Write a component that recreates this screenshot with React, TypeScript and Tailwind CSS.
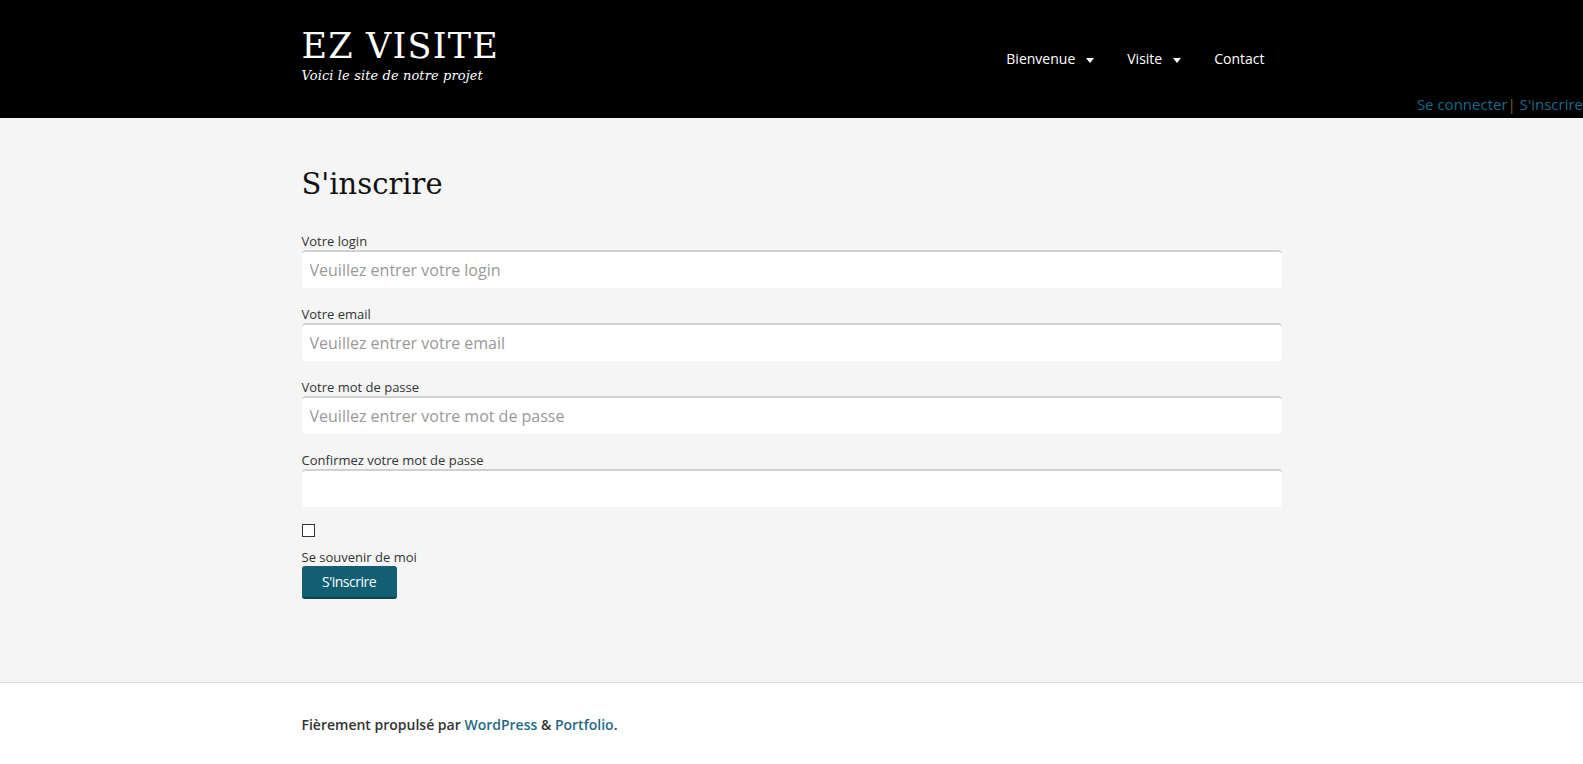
import { useState } from "react";

const fields = [
  { label: "Votre login", placeholder: "Veuillez entrer votre login", type: "text" },
  { label: "Votre email", placeholder: "Veuillez entrer votre email", type: "email" },
  { label: "Votre mot de passe", placeholder: "Veuillez entrer votre mot de passe", type: "password" },
  { label: "Confirmez votre mot de passe", placeholder: "", type: "password" },
];

function Caret() {
  return (
    <svg width="8" height="5" viewBox="0 0 8 5" className="ml-[11px] mt-[2px]" aria-hidden>
      <path d="M0 0h8L4 5z" fill="currentColor" />
    </svg>
  );
}

export default function App() {
  const [remember, setRemember] = useState(false);

  return (
    <div className="min-h-[764px] bg-white font-['Open_Sans',sans-serif] text-[#333]">
      <header className="relative h-[118px] bg-black text-white">
        <div className="mx-auto flex w-[980px] items-start justify-between pt-[25px]">
          <div>
            <div className="[font-family:'DejaVu_Serif',serif] text-[35px] leading-[42px] tracking-[1.2px]">EZ VISITE</div>
            <div className="mt-[1px] [font-family:'DejaVu_Serif',serif] text-[13px] italic leading-[16px] tracking-[0.1px]">
              Voici le site de notre projet
            </div>
          </div>
          <nav className="mr-[17px] mt-[24px] flex items-center text-[14px] leading-[20px]">
            <a className="flex items-center">
              Bienvenue
              <Caret />
            </a>
            <a className="ml-[33px] flex items-center">
              Visite
              <Caret />
            </a>
            <a className="ml-[33px]">Contact</a>
          </nav>
        </div>
        <div className="absolute bottom-[4px] right-0 text-[15px] leading-[20px] text-[#1b6a87]">
          Se connecter<span className="text-[#7a5a3a]">|</span> S'inscrire
        </div>
      </header>

      <main className="bg-[#f5f5f5] pb-[83px] pt-[46px]">
        <div className="mx-auto w-[980px]">
          <h1 className="[font-family:'DejaVu_Serif',serif] text-[29px] leading-[40px] text-[#111]">S'inscrire</h1>
          <form className="mt-[28px]">
            {fields.map((f) => (
              <div key={f.label} className="mb-[17px]">
                <label className="block text-[13px] leading-[18px] text-[#333]">{f.label}</label>
                <input
                  type={f.type}
                  placeholder={f.placeholder}
                  className="block h-[38px] w-full rounded-[4px] border-t-2 border-[#d0d0d0] bg-white px-[8px] text-[16px] text-[#333] outline-none placeholder:text-[#999]"
                />
              </div>
            ))}
            <input
              type="checkbox"
              checked={remember}
              onChange={(e) => setRemember(e.target.checked)}
              className="mt-[2px] block h-[13px] w-[13px] appearance-none border border-[#333] bg-white"
            />
            <div className="mt-[11px] text-[13px] leading-[18px]">Se souvenir de moi</div>
            <button
              type="button"
              className="h-[33px] w-[95px] rounded-[3px] border-b-2 border-[#0a4556] bg-[#125e73] text-[14px] tracking-[-0.5px] text-white"
            >
              S'inscrire
            </button>
          </form>
        </div>
      </main>

      <footer className="border-t border-[#dcdcdc] bg-white pb-[30px] pt-[33px]">
        <div className="mx-auto w-[980px] text-[14px] font-semibold leading-[18px] text-[#333]">
          Fièrement propulsé par <a className="text-[#1e6a85]">WordPress</a> &amp;{" "}
          <a className="text-[#1e6a85]">Portfolio</a>.
        </div>
      </footer>
    </div>
  );
}
